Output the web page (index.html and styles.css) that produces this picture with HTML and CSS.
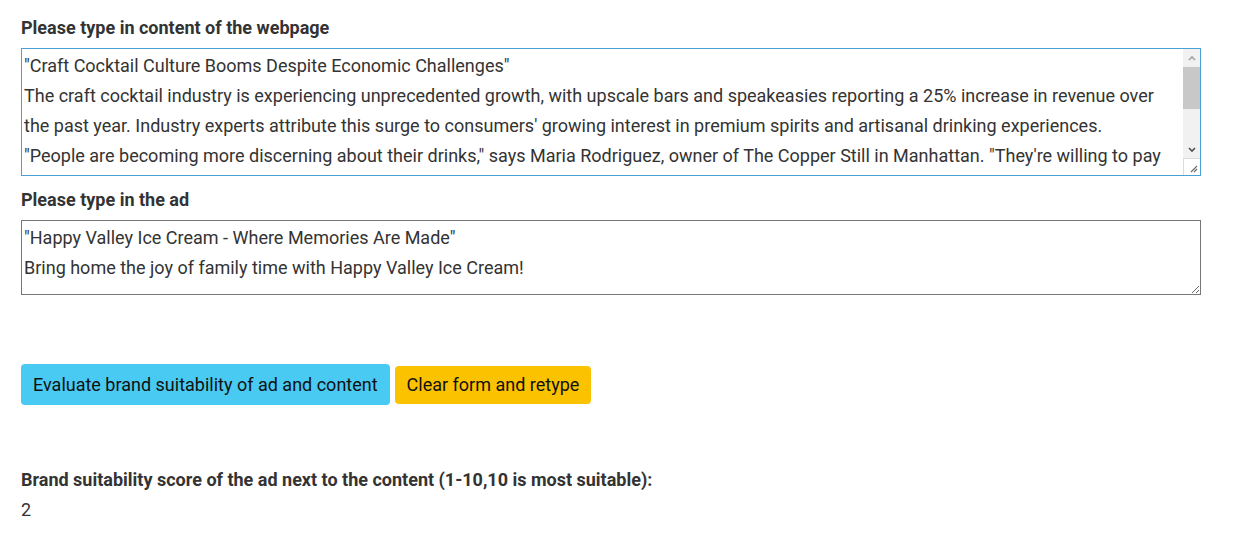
FILE: index.html
```html
<!DOCTYPE html>
<html lang="en">
<head>
    <meta charset="UTF-8">
    <meta name="viewport" content="width=device-width, initial-scale=1.0">
    <title>Brand Suitability</title>
    <link rel="stylesheet" href="styles.css">
</head>
<body>
    <div class="suitability-form">
        <label for="content" class="field-label">Please type in content of the webpage</label>
        <div class="scroll-wrap">
            <textarea id="content" class="content-box is-active">"Craft Cocktail Culture Booms Despite Economic Challenges"
The craft cocktail industry is experiencing unprecedented growth, with upscale bars and speakeasies reporting a 25% increase in revenue over the past year. Industry experts attribute this surge to consumers' growing interest in premium spirits and artisanal drinking experiences.
"People are becoming more discerning about their drinks," says Maria Rodriguez, owner of The Copper Still in Manhattan. "They're willing to pay more for quality ingredients, house-made syrups and bartenders who know their craft."
Late-night tastings, whiskey flights and bottomless happy hours now draw crowds every weekend, and several venues have extended their opening hours well past midnight.
Analysts expect the trend to continue into next year.</textarea>
            <!-- drawn scrollbar, the headless browser hides the real one -->
            <div class="fake-scrollbar" aria-hidden="true">
                <div class="sb-button">
                    <svg width="8" height="6" viewBox="0 0 8 6"><path d="M1 5 L4 2 L7 5" fill="none" stroke="#a3a3a3" stroke-width="1.6"/></svg>
                </div>
                <div class="sb-track"><div class="sb-thumb"></div></div>
                <div class="sb-button">
                    <svg width="8" height="6" viewBox="0 0 8 6"><path d="M1 1 L4 4 L7 1" fill="none" stroke="#505050" stroke-width="1.6"/></svg>
                </div>
                <div class="sb-corner">
                    <svg width="8" height="8" viewBox="0 0 8 8"><path d="M1 7 L7 1 M4 7 L7 4" stroke="#6a6a6a" stroke-width="1.1"/></svg>
                </div>
            </div>
        </div>

        <label for="ad" class="field-label second">Please type in the ad</label>
        <textarea id="ad" class="ad-box">"Happy Valley Ice Cream - Where Memories Are Made"
Bring home the joy of family time with Happy Valley Ice Cream!</textarea>

        <div class="actions">
            <button id="evaluateBtn" class="btn btn-info">Evaluate brand suitability of ad and content</button>
            <button id="clearBtn" class="btn btn-warning">Clear form and retype</button>
        </div>

        <div class="result-label">Brand suitability score of the ad next to the content (1-10,10 is most suitable):</div>
        <div id="score" class="result-value">2</div>
    </div>
</body>
</html>
```

FILE: styles.css
```css
body {
    font-family: Roboto, "Noto Sans", Arial, sans-serif;
    font-size: 18px;
    color: #333;
    margin: 0;
    background-color: #fff;
}

.suitability-form {
    width: 1180px;
    padding: 16px 0 0 21px;
}

.field-label {
    display: block;
    font-weight: bold;
    line-height: 24px;
    margin-bottom: 8px;
}

.field-label.second {
    margin-top: 12px;
}

textarea {
    display: block;
    width: 100%;
    box-sizing: border-box;
    margin: 0;
    padding: 2px;
    font-family: inherit;
    font-size: 18px;
    line-height: 30px;
    color: #333;
    border: 1px solid #767676;
    border-radius: 0;
    outline: none;
}

.scroll-wrap {
    position: relative;
}

.content-box {
    height: 128px;
    overflow: hidden;
    padding-right: 19px;
    resize: none;
}

.content-box.is-active {
    border-color: #4a9fd8; /* focused look */
}

.fake-scrollbar {
    position: absolute;
    top: 1px;
    right: 1px;
    bottom: 1px;
    width: 17px;
    display: flex;
    flex-direction: column;
    background-color: #f1f1f1;
}

.sb-button {
    height: 17px;
    display: flex;
    align-items: center;
    justify-content: center;
}

.sb-track {
    flex: 1;
    padding-top: 1px;
}

.sb-thumb {
    height: 42px;
    background-color: #c8c8c8;
}

.sb-corner {
    height: 17px;
    box-sizing: border-box;
    border-top: 1px solid #dcdcdc;
    border-left: 1px solid #dcdcdc;
    background-color: #fff;
    display: flex;
    align-items: flex-end;
    justify-content: flex-end;
    padding: 0 2px 2px 0;
}

.ad-box {
    height: 75px;
}

.actions {
    margin-top: 69px;
    display: flex;
    align-items: center;
    gap: 5px;
}

.btn {
    font-family: inherit;
    font-size: 18px;
    color: #111;
    border: none;
    border-radius: 4px;
    padding: 0 12px;
    cursor: pointer;
}

.btn-info {
    height: 41px;
    background-color: #48caf2;
}

.btn-warning {
    height: 38px;
    background-color: #fbc200;
}

.result-label {
    margin-top: 63px;
    font-weight: bold;
    line-height: 24px;
}

.result-value {
    margin-top: 6px;
    line-height: 24px;
}
```
